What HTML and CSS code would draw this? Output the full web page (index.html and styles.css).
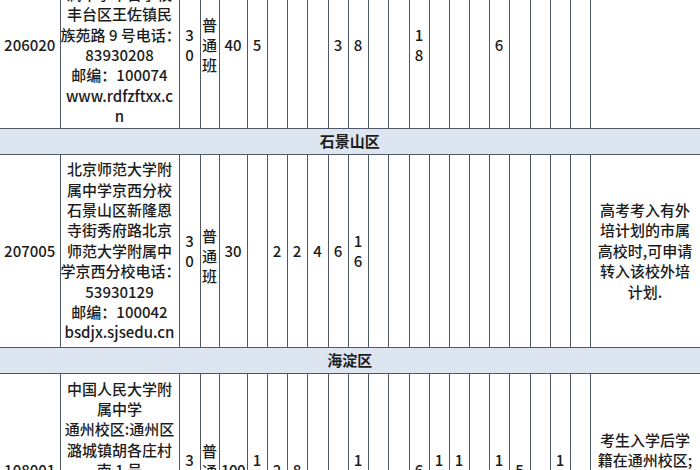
FILE: index.html
```html
<!DOCTYPE html>
<html lang="zh-CN">
<head>
<meta charset="utf-8">
<title>招生计划</title>
<link rel="stylesheet" href="styles.css">
</head>
<body>
<div class="sheet">
<table class="grid">
<colgroup>
<col class="c-code"><col class="c-addr"><col class="c-len"><col class="c-type"><col class="c-big">
<col class="c-n"><col class="c-n"><col class="c-n"><col class="c-n21"><col class="c-n"><col class="c-n"><col class="c-n"><col class="c-n21">
<col class="c-n"><col class="c-n"><col class="c-n"><col class="c-n"><col class="c-n"><col class="c-n21"><col class="c-n"><col class="c-n"><col class="c-n">
<col class="c-note">
</colgroup>
<tbody>
<tr class="r1">
<td class="code">206020</td>
<td class="addr">中国人民大学附<br>属中学丰台学校<br>丰台区王佐镇民<br>族苑路 9 号电话：<br>83930208<br>邮编：100074<br>www.rdfzftxx.c<br>n</td>
<td class="num">3<br>0</td>
<td class="type">普<br>通<br>班</td>
<td class="num">40</td>
<td class="num">5</td><td></td><td></td><td></td><td class="num">3</td><td class="num">8</td><td></td><td></td>
<td class="num">1<br>8</td><td></td><td></td><td></td><td class="num">6</td><td></td><td></td><td></td><td></td>
<td class="note"></td>
</tr>
<tr class="band"><td colspan="23">石景山区</td></tr>
<tr class="r2">
<td class="code">207005</td>
<td class="addr">北京师范大学附<br>属中学京西分校<br>石景山区新隆恩<br>寺街秀府路北京<br>师范大学附属中<br>学京西分校电话：<br>53930129<br>邮编：100042<br>bsdjx.sjsedu.cn</td>
<td class="num">3<br>0</td>
<td class="type type-low">普<br>通<br>班</td>
<td class="num">30</td>
<td></td><td class="num">2</td><td class="num">2</td><td class="num">4</td><td class="num">6</td><td class="num">1<br>6</td><td></td><td></td>
<td></td><td></td><td></td><td></td><td></td><td></td><td></td><td></td><td></td>
<td class="note">高考考入有外<br>培计划的市属<br>高校时,可申请<br>转入该校外培<br>计划.</td>
</tr>
<tr class="band"><td colspan="23">海淀区</td></tr>
<tr class="r3">
<td class="code">108001</td>
<td class="addr">中国人民大学附<br>属中学<br>通州校区:通州区<br>潞城镇胡各庄村<br>南 1 号<br>电话：<br>81501234<br>邮编：101117<br>tz.rdfz.cn</td>
<td class="num">3<br>0</td>
<td class="type">普<br>通<br>班</td>
<td class="num num-tight">100</td>
<td class="num">1<br>0</td><td class="num">2</td><td class="num">8</td><td></td><td></td><td class="num">1<br>2</td><td></td><td></td>
<td class="num">6</td><td class="num">1<br>0</td><td class="num">1<br>5</td><td></td><td class="num">1<br>2</td><td class="num">5</td><td></td><td class="num">1<br>0</td><td></td>
<td class="note">考生入学后学<br>籍在通州校区;<br>毕业时颁发人<br>大附中毕业证</td>
</tr>
</tbody>
</table>
</div>
</body>
</html>
```
FILE: styles.css
```css
html, body {
  margin: 0;
  padding: 0;
  background: #ffffff;
}

.sheet {
  width: 700px;
  height: 470px;
  overflow: hidden;
}

.grid {
  margin-top: -39px;
  width: 700px;
  table-layout: fixed;
  border-collapse: collapse;
  font-family: "Noto Sans CJK SC", "Noto Sans", sans-serif;
  font-size: 15px;
  font-weight: 500;
  line-height: 20.4px;
  color: #1c1c1c;
}

.c-code { width: 60px; }
.c-addr { width: 119px; }
.c-len { width: 21px; }
.c-type { width: 19px; }
.c-big { width: 28px; }
.c-n { width: 20px; }
.c-n21 { width: 21px; }
.c-note { width: 110px; }

.grid td {
  border: 1px solid #4f5866;
  padding: 0;
  text-align: center;
  vertical-align: middle;
  white-space: nowrap;
  overflow: visible;
  background: #ffffff;
}

.grid tr > td:first-child {
  border-left: none;
}

.r1 td { height: 166px; }
.r2 td { height: 192px; }
.r3 td { height: 193px; }

.grid .band td {
  height: 25px;
  background: #dce5f0;
  font-weight: bold;
}

.grid td.type {
  line-height: 20px;
}

.grid .r2 td.type-low {
  height: 182px;
  padding-top: 10px;
}

.grid td.num-tight {
  letter-spacing: -0.5px;
}
```
